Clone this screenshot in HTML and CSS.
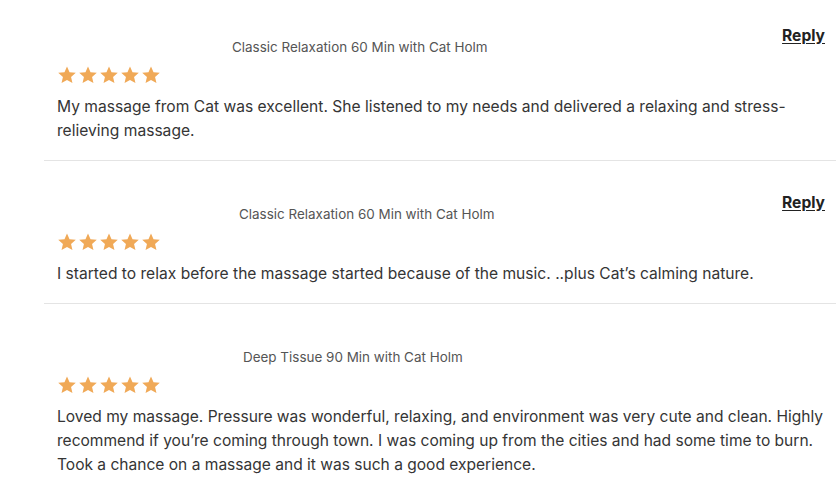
FILE: index.html
```html
<!DOCTYPE html>
<html lang="en">
<head>
<meta charset="utf-8">
<title>Reviews</title>
<link rel="stylesheet" href="styles.css">
</head>
<body>
<svg width="0" height="0" class="defs" aria-hidden="true">
  <defs>
    <symbol id="star" viewBox="0 0 24 24">
      <path d="M12 1.8l3.05 6.9 7.5.7-5.68 4.98 1.68 7.36L12 17.9l-6.55 3.84 1.68-7.36L1.45 9.4l7.5-.7z"/>
    </symbol>
  </defs>
</svg>
<div class="list">
  <div class="review review--first">
    <div class="head">
      <div class="head-left">
        <span class="name n1"></span>
        <span class="meta">Classic Relaxation 60 Min with Cat Holm</span>
      </div>
      <a class="reply" href="#">Reply</a>
    </div>
    <div class="stars">
      <svg class="star"><use href="#star"/></svg><svg class="star"><use href="#star"/></svg><svg class="star"><use href="#star"/></svg><svg class="star"><use href="#star"/></svg><svg class="star"><use href="#star"/></svg>
    </div>
    <p class="body">My massage from Cat was excellent. She listened to my needs and delivered a relaxing and stress-relieving massage.</p>
  </div>
  <div class="review">
    <div class="head">
      <div class="head-left">
        <span class="name n2"></span>
        <span class="meta">Classic Relaxation 60 Min with Cat Holm</span>
      </div>
      <a class="reply" href="#">Reply</a>
    </div>
    <div class="stars">
      <svg class="star"><use href="#star"/></svg><svg class="star"><use href="#star"/></svg><svg class="star"><use href="#star"/></svg><svg class="star"><use href="#star"/></svg><svg class="star"><use href="#star"/></svg>
    </div>
    <p class="body">I started to relax before the massage started because of the music. ..plus Cat’s calming nature.</p>
  </div>
  <div class="review">
    <div class="head">
      <div class="head-left">
        <span class="name n3"></span>
        <span class="meta">Deep Tissue 90 Min with Cat Holm</span>
      </div>
    </div>
    <div class="stars">
      <svg class="star"><use href="#star"/></svg><svg class="star"><use href="#star"/></svg><svg class="star"><use href="#star"/></svg><svg class="star"><use href="#star"/></svg><svg class="star"><use href="#star"/></svg>
    </div>
    <p class="body body--tight">Loved my massage. Pressure was wonderful, relaxing, and environment was very cute and clean. Highly recommend if you’re coming through town. I was coming up from the cities and had some time to burn. Took a chance on a massage and it was such a good experience.</p>
  </div>
</div>
</body>
</html>
```

FILE: styles.css
```css
html, body {
  margin: 0;
  padding: 0;
  background: #ffffff;
}
body {
  font-family: Inter, "Noto Sans", Roboto, sans-serif;
  color: #333333;
  overflow: hidden;
}
.defs {
  position: absolute;
  width: 0;
  height: 0;
}
.list {
  margin-left: 44px;
}
.review {
  padding: 31px 8px 17px 13px;
  border-bottom: 1px solid #e4e4e4;
}
.review--first {
  padding-top: 25px;
}
.review:last-child {
  border-bottom: none;
}
.head {
  display: flex;
  justify-content: space-between;
  align-items: flex-start;
  min-height: 30px;
}
.head-left {
  display: flex;
  align-items: flex-end;
  height: 30px;
}
.name {
  display: block;
  height: 30px;
}
.n1 { width: 175px; }
.n2 { width: 182px; }
.n3 { width: 186px; }
.meta {
  font-size: 13.45px;
  line-height: 15px;
  color: #555555;
}
.reply {
  font-size: 15.6px;
  line-height: 21px;
  font-weight: 700;
  color: #222222;
  text-decoration: underline;
  text-underline-offset: 2px;
  margin-right: 3px;
}
.stars {
  display: flex;
  gap: 1px;
  margin-top: 11px;
  height: 18px;
  align-items: center;
}
.star {
  width: 20px;
  height: 20px;
  fill: #f0a957;
}
.body {
  margin: 11px 0 0 0;
  font-size: 15.6px;
  line-height: 24px;
  color: #353535;
}
.body--tight {
  font-size: 15.55px;
}
```
